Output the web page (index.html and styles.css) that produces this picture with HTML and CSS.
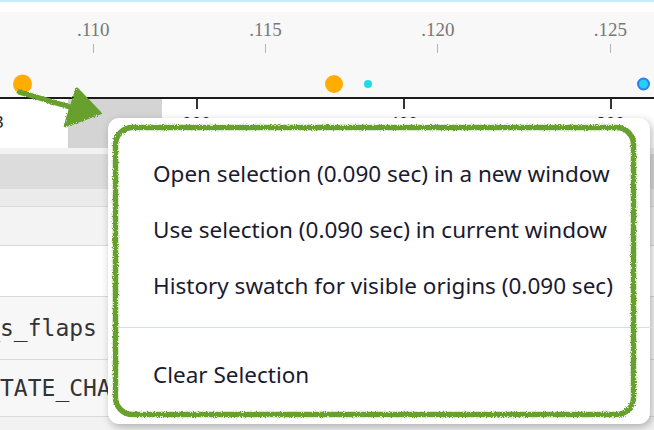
FILE: index.html
```html
<!DOCTYPE html>
<html lang="en">
<head>
    <meta charset="UTF-8">
    <meta name="viewport" content="width=device-width, initial-scale=1.0">
    <title>Timeline selection</title>
    <link rel="stylesheet" href="styles.css">
</head>
<body>
    <div class="app">
        <div class="topline"></div>
        <div class="gap"></div>

        <!-- timeline ruler with event dots -->
        <div class="ruler">
            <div class="ruler-labels">
                <div class="tick-cell"><span class="tick-label">.110</span><span class="tick"></span></div>
                <div class="tick-cell"><span class="tick-label">.115</span><span class="tick"></span></div>
                <div class="tick-cell"><span class="tick-label">.120</span><span class="tick"></span></div>
                <div class="tick-cell"><span class="tick-label">.125</span><span class="tick"></span></div>
            </div>
            <span class="dot dot-orange" style="left: 13px; width: 19px; height: 19px;"></span>
            <span class="dot dot-orange" style="left: 325px; width: 18px; height: 18px;"></span>
            <span class="dot dot-cyan" style="left: 364px; width: 8px; height: 8px;"></span>
            <span class="dot dot-blue" style="left: 637px; width: 13px; height: 13px;"></span>
        </div>

        <div class="axis">
            <div class="selection"></div>
            <span class="axis-cut">3</span>
            <div class="axis-ticks">
                <div class="axis-cell"><span class="axis-tick"></span><span class="axis-label">000</span></div>
                <div class="axis-cell"><span class="axis-tick"></span><span class="axis-label">400</span></div>
                <div class="axis-cell"><span class="axis-tick"></span><span class="axis-label">800</span></div>
            </div>
        </div>

        <div class="row row-thin"></div>
        <div class="row row-band"></div>
        <div class="row row-sub"></div>
        <div class="row row-light"></div>
        <div class="row row-white"></div>
        <div class="row row-name"><span class="mono">cmd_s_flaps</span></div>
        <div class="row row-name row-short"><span class="mono">AC_STATE_CHANGE</span></div>
        <div class="row row-rest"></div>
    </div>

    <!-- context menu over the timeline -->
    <div class="menu">
        <div class="menu-item">Open selection (0.090 sec) in a new window</div>
        <div class="menu-item">Use selection (0.090 sec) in current window</div>
        <div class="menu-item">History swatch for visible origins (0.090 sec)</div>
        <div class="menu-sep"></div>
        <div class="menu-item">Clear Selection</div>
    </div>

    <!-- hand drawn annotation -->
    <svg class="marks" width="654" height="430" viewBox="0 0 654 430">
        <defs>
            <filter id="rough" x="-5%" y="-5%" width="110%" height="110%">
                <feTurbulence type="fractalNoise" baseFrequency="0.9" numOctaves="2" seed="3" result="noise"/>
                <feDisplacementMap in="SourceGraphic" in2="noise" scale="3.5"/>
            </filter>
        </defs>
        <g filter="url(#rough)" fill="none" stroke="#67a02e" stroke-linecap="round" stroke-linejoin="round">
            <rect x="115.5" y="127.5" width="518" height="287" rx="17" stroke-width="5.5"/>
            <path d="M19 92 L70 107" stroke-width="5"/>
            <path d="M77 89 L100 113 L65 126 Z" fill="#67a02e" stroke-width="3"/>
        </g>
    </svg>
</body>
</html>
```

FILE: styles.css
```css
body {
    margin: 0;
    width: 654px;
    height: 430px;
    overflow: hidden;
    background-color: #ffffff;
    font-family: "Noto Sans", "Open Sans", sans-serif;
}
.app {
    width: 654px;
    height: 430px;
    overflow: hidden;
}
.topline {
    height: 2px;
    background-color: #c6ebfb;
}
.gap {
    height: 10px;
    background-color: #ffffff;
}
.ruler {
    position: relative;
    height: 85px;
    background-color: #f8f8f8;
    overflow: hidden;
}
.ruler-labels {
    display: flex;
    padding-left: 7px;
    padding-top: 8px;
}
.tick-cell {
    flex: 0 0 172.4px;
    display: flex;
    flex-direction: column;
    align-items: center;
}
.tick-label {
    font-family: "Liberation Serif", serif;
    font-size: 19px;
    line-height: 20px;
    color: #777777;
}
.tick {
    width: 1px;
    height: 9px;
    margin-top: 4px;
    background-color: #b5b5b5;
}
.dot {
    position: absolute;
    top: 72px;
    border-radius: 50%;
    transform: translateY(-50%);
}
.dot-orange {
    background-color: #ffad00;
}
.dot-cyan {
    background-color: #1fdbe6;
}
.dot-blue {
    background-color: #21d0f2;
    border: 2px solid #2f7cf6;
    box-sizing: border-box;
}
.axis {
    position: relative;
    height: 49px;
    border-top: 2px solid #1b1b1b;
    background-color: #ffffff;
    overflow: hidden;
}
.selection {
    position: absolute;
    left: 68px;
    top: 0;
    width: 94px;
    height: 49px;
    background-color: #d4d4d4;
}
.axis-cut {
    position: absolute;
    left: -6px;
    top: 13px;
    font-size: 17px;
    line-height: 20px;
    color: #222222;
}
.axis-ticks {
    position: relative;
    display: flex;
    padding-left: 93px;
}
.axis-cell {
    flex: 0 0 207px;
    display: flex;
    flex-direction: column;
    align-items: center;
}
.axis-tick {
    width: 2px;
    height: 10px;
    background-color: #333333;
}
.axis-label {
    margin-top: 4px;
    font-size: 17px;
    line-height: 20px;
    color: #222222;
}
.row {
    border-bottom: 1px solid #dadada;
    display: flex;
    align-items: center;
    overflow: hidden;
}
.row-thin {
    height: 6px;
    background-color: #f2f2f2;
    border-bottom: none;
}
.row-band {
    height: 35px;
    background-color: #dcdcdc;
    border-bottom: none;
}
.row-sub {
    height: 17px;
    background-color: #ebebeb;
}
.row-light {
    height: 38px;
    background-color: #f3f3f3;
}
.row-white {
    height: 50px;
    background-color: #ffffff;
}
.row-name {
    height: 62px;
    background-color: #f7f7f7;
}
.row-short {
    height: 56px;
}
.row-rest {
    height: 40px;
    background-color: #f2f2f2;
}
.mono {
    font-family: "DejaVu Sans Mono", monospace;
    font-size: 23px;
    color: #333333;
    white-space: nowrap;
    margin-left: -4ch;
}
.menu {
    position: absolute;
    left: 108px;
    top: 118px;
    width: 542px;
    height: 306px;
    box-sizing: border-box;
    padding-top: 28px;
    background-color: #ffffff;
    border-radius: 11px;
    box-shadow: 2px 3px 8px rgba(0, 0, 0, 0.28);
}
.menu-item {
    height: 56px;
    line-height: 56px;
    padding-left: 45px;
    font-size: 22.5px;
    color: #1a1a30;
    white-space: nowrap;
}
.menu-sep {
    height: 1px;
    margin: 13px -4px 19px 9px;
    background-color: #cfe0f6;
}
.marks {
    position: absolute;
    left: 0;
    top: 0;
    pointer-events: none;
}
```
